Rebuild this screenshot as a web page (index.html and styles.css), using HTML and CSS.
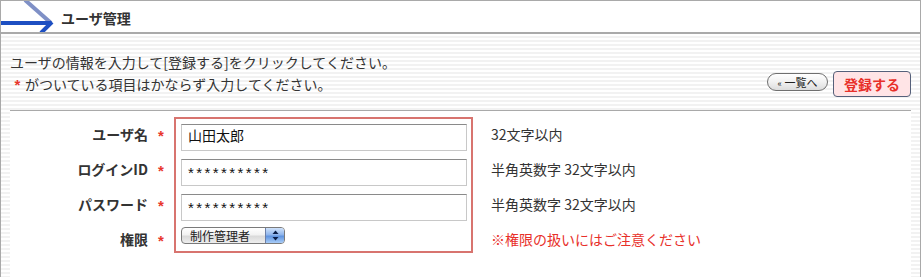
FILE: index.html
```html
<!DOCTYPE html>
<html lang="ja">
<head>
<meta charset="utf-8">
<title>ユーザ管理</title>
<link rel="stylesheet" href="styles.css">
</head>
<body>
<div class="panel">
  <div class="header">
    <svg class="logo" width="56" height="31" viewBox="0 0 56 31">
      <line x1="24" y1="-1" x2="50" y2="22" stroke="#7f90c6" stroke-width="4"/>
      <line x1="0" y1="22" x2="50" y2="22" stroke="#1d4fc2" stroke-width="4"/>
      <line x1="51" y1="21" x2="40" y2="32" stroke="#1d4fc2" stroke-width="4"/>
    </svg>
    <h1 class="title">ユーザ管理</h1>
  </div>
  <div class="content">
    <div class="intro">
      <div class="intro-text">
        <p>ユーザの情報を入力して[登録する]をクリックしてください。</p>
        <p><span class="req req-small">*</span>がついている項目はかならず入力してください。</p>
      </div>
      <div class="actions">
        <button class="btn-back" type="button"><span class="laquo">«</span> 一覧へ</button>
        <button class="btn-submit" type="button">登録する</button>
      </div>
    </div>
    <div class="sheet">
      <div class="form">
        <div class="labels">
          <div class="row">ユーザ名</div>
          <div class="row">ログインID</div>
          <div class="row">パスワード</div>
          <div class="row">権限</div>
        </div>
        <div class="stars">
          <div class="row req">*</div>
          <div class="row req">*</div>
          <div class="row req">*</div>
          <div class="row req">*</div>
        </div>
        <div class="fields">
          <input class="field" type="text" value="山田太郎">
          <input class="field mask" type="text" value="**********">
          <input class="field mask" type="text" value="**********">
          <div class="select">
            <span class="select-text">制作管理者</span>
            <span class="select-arrows">
              <svg width="7" height="11" viewBox="0 0 7 11">
                <polygon points="3.5,0.5 6.5,4 0.5,4" fill="#0a1e48"/>
                <polygon points="3.5,10.5 6.5,7 0.5,7" fill="#0a1e48"/>
              </svg>
            </span>
          </div>
        </div>
        <div class="hints">
          <div class="row">32文字以内</div>
          <div class="row">半角英数字 32文字以内</div>
          <div class="row">半角英数字 32文字以内</div>
          <div class="row warn">※権限の扱いにはご注意ください</div>
        </div>
      </div>
    </div>
  </div>
</div>
</body>
</html>
```
FILE: styles.css
```css
html, body {
  margin: 0;
  padding: 0;
  height: 100%;
  background: #fff;
}
body {
  font-family: "Noto Sans CJK JP", "Noto Sans", sans-serif;
  color: #333;
}
.panel {
  box-sizing: border-box;
  width: 921px;
  height: 277px;
  border: 1px solid #a9a9a9;
  border-bottom: none;
  display: flex;
  flex-direction: column;
}
.header {
  height: 31px;
  border-bottom: 2px solid #aaa;
  display: flex;
  align-items: flex-start;
  background: #fff;
}
.logo {
  display: block;
  flex: none;
}
.title {
  margin: 0 0 0 4px;
  font-size: 14px;
  font-weight: bold;
  line-height: 34px;
  color: #333;
}
.content {
  flex: 1;
  display: flex;
  flex-direction: column;
  background: repeating-linear-gradient(to bottom, #ffffff 0 2px, #f2f2f2 2px 4px);
}
.intro {
  display: flex;
  justify-content: space-between;
  align-items: flex-end;
  padding: 17px 9px 14px 9px;
}
.intro-text p {
  margin: 0;
  font-size: 14px;
  line-height: 22px;
  color: #333;
}
.req {
  color: #e8362d;
  font-family: "Liberation Sans", sans-serif;
  font-weight: bold;
}
.req-small {
  display: inline-block;
  width: 15px;
  text-align: center;
  font-size: 15px;
}
.actions {
  display: flex;
  align-items: flex-end;
  gap: 5px;
  margin-bottom: -1px;
}
.btn-back {
  height: 18px;
  width: 61px;
  padding: 0;
  margin-bottom: 6px;
  border: 1px solid #6f6f6f;
  border-radius: 9px;
  background: linear-gradient(to bottom, #ffffff 0%, #f1f1f1 50%, #dcdcdc 100%);
  font-family: "Noto Sans CJK JP", sans-serif;
  font-size: 11px;
  line-height: 16px;
  color: #222;
}
.laquo {
  font-size: 9px;
}
.btn-submit {
  height: 26px;
  width: 78px;
  padding: 0;
  border: 1px solid #55607a;
  border-radius: 4px;
  background: #ffe4e6;
  font-family: "Noto Sans CJK JP", sans-serif;
  font-size: 14px;
  font-weight: bold;
  color: #e8302a;
  line-height: 24px;
}
.sheet {
  flex: 1;
  margin: 0 9px;
  background: #fff;
  border-top: 1px solid #a9a9a9;
  padding-top: 6px;
}
.form {
  display: flex;
  align-items: flex-start;
}
.labels {
  width: 138px;
  text-align: right;
  font-weight: bold;
  font-size: 14px;
  color: #333;
}
.row {
  height: 35px;
  line-height: 35px;
  white-space: nowrap;
}
.stars {
  width: 26px;
  text-align: center;
  font-size: 15px;
}
.stars .row {
  line-height: 37px;
}
.fields {
  width: 286px;
  border: 2px solid #d8746f;
  padding: 5px 4px 7px 5px;
  display: flex;
  flex-direction: column;
  gap: 8px;
}
.field {
  display: block;
  box-sizing: border-box;
  width: 286px;
  height: 27px;
  margin: 0;
  padding: 0 6px 6px 6px;
  border: 1px solid #c8c8c8;
  border-top-color: #8a8a8a;
  font-family: "Noto Sans CJK JP", sans-serif;
  font-size: 14px;
  line-height: 20px;
  color: #111;
  background: #fff;
  outline: none;
}
.mask {
  font-family: "Liberation Sans", sans-serif;
  font-size: 15px;
  letter-spacing: 2.4px;
  padding-top: 3px;
  padding-bottom: 3px;
}
.select {
  box-sizing: border-box;
  width: 104px;
  height: 17px;
  margin-top: -2px;
  border: 1px solid #7a7a7a;
  border-radius: 4px;
  display: flex;
  overflow: hidden;
  background: linear-gradient(to bottom, #ffffff 0%, #f2f2f2 45%, #dadada 55%, #eeeeee 100%);
}
.select-text {
  flex: 1;
  font-size: 12px;
  line-height: 15px;
  padding-left: 8px;
  color: #222;
}
.select-arrows {
  width: 18px;
  border-left: 1px solid #6b7fa8;
  display: flex;
  align-items: center;
  justify-content: center;
  background: linear-gradient(to bottom, #cfe2fb 0%, #8fb5ec 45%, #5f93e0 55%, #a9cdf7 100%);
}
.select-arrows svg {
  display: block;
}
.hints {
  margin-left: 18px;
  font-size: 14px;
  color: #333;
}
.warn {
  color: #e8302a;
}
```
